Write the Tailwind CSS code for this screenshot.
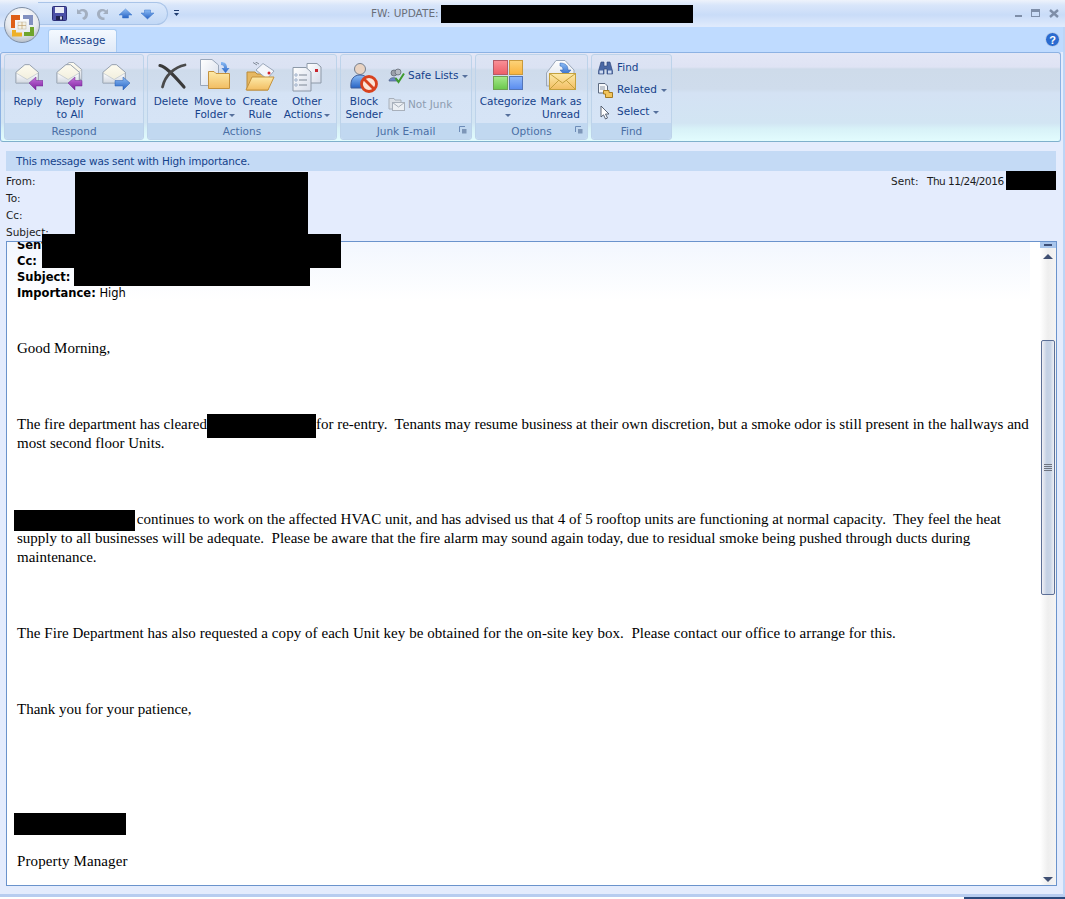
<!DOCTYPE html>
<html lang="en">
<head>
<meta charset="utf-8">
<title>FW: UPDATE</title>
<script src="https://cdn.jsdelivr.net/npm/@tailwindcss/browser@4"></script>
</head>
<body class="bg-[#e4ecfd]">

<!-- shared icon parts -->
<svg class="block h-0 w-0" aria-hidden="true">
  <defs>
    <linearGradient id="env" x1="0" y1="0" x2="0" y2="1"><stop offset="0" stop-color="#ffffff"/><stop offset="1" stop-color="#d3d9e2"/></linearGradient>
    <linearGradient id="flap" x1="0" y1="0" x2="0" y2="1"><stop offset="0" stop-color="#fdfbf0"/><stop offset="1" stop-color="#efecd9"/></linearGradient>
    <linearGradient id="fold" x1="0" y1="0" x2="0" y2="1"><stop offset="0" stop-color="#fdeaa8"/><stop offset="1" stop-color="#f2bd62"/></linearGradient>
    <linearGradient id="page" x1="0" y1="0" x2="1" y2="1"><stop offset="0" stop-color="#ffffff"/><stop offset="1" stop-color="#d5dcea"/></linearGradient>
    <linearGradient id="purple" x1="0" y1="0" x2="0" y2="1"><stop offset="0" stop-color="#c873de"/><stop offset="1" stop-color="#7a1f9c"/></linearGradient>
    <linearGradient id="blue" x1="0" y1="0" x2="0" y2="1"><stop offset="0" stop-color="#8cbcf5"/><stop offset="1" stop-color="#2763c4"/></linearGradient>
    <symbol id="openenv" viewBox="0 0 30 26">
      <path d="M1 10 L11 1.500 H16 L26 10 V22 H1Z" fill="url(#flap)" stroke="#8d99a8"/>
      <path d="M1.500 11 L13.500 18 L25.500 11 V21.500 H1.500Z" fill="url(#env)" stroke="#aab4c2" stroke-width="0.6"/>
    </symbol>
  </defs>
</svg>

<div class="relative flex h-[899px] w-[1065px] flex-col overflow-hidden [font-family:'DejaVu_Sans',sans-serif] text-[10.5px]">

  <!-- title bar -->
  <div class="flex h-[27px] shrink-0 items-center bg-[linear-gradient(#eef3fb_0,#d9e6fa_5px,#c9dcf8_15px,#dfeafc_26px)]">
    <div class="ml-[38px] flex h-[23px] w-[130px] items-center gap-[7px] rounded-r-[12px] border border-l-0 border-[#a9c4e8] bg-[linear-gradient(#dce9fb,#c2d8f6)] pl-[14px]">
      <svg width="15" height="15" viewBox="0 0 15 15"><rect x="0.500" y="0.500" width="14" height="14" rx="1" fill="#4a4fa6" stroke="#2d2f78"/><rect x="3" y="1" width="9" height="6" fill="#e9ecf6"/><rect x="4" y="10" width="7" height="4" fill="#20224f"/><rect x="8" y="10.500" width="2" height="3" fill="#cfd3e6"/></svg>
      <svg width="15" height="14" viewBox="0 0 15 14"><path d="M3 2 V7 H8 L6 5 C8 3.500 11 4.500 11 7 C11 9 10 10 8 11 L10 13 C13 12 14 9.500 14 7 C14 2.500 8.500 0.500 5 3.500Z" fill="#a3afc0"/></svg>
      <svg width="15" height="14" viewBox="0 0 15 14"><path d="M12 2 V7 H7 L9 5 C7 3.500 4 4.500 4 7 C4 9.500 6.500 11 8.500 10.500 L8.500 13 C4 13.500 1 10.500 1 7 C1 2.500 6.500 0.500 10 3.500Z" fill="#a3afc0"/></svg>
      <svg width="15" height="12" viewBox="0 0 15 12"><path d="M7.500 1 L14 7 H10.500 V10 H4.500 V7 H1Z" fill="url(#blue)" stroke="#3a74c9" stroke-width="0.5"/></svg>
      <svg width="15" height="12" viewBox="0 0 15 12"><path d="M7.500 11 L14 5 H10.500 V2 H4.500 V5 H1Z" fill="url(#blue)" stroke="#3a74c9" stroke-width="0.5"/></svg>
    </div>
    <svg class="ml-[5px]" width="7" height="9" viewBox="0 0 7 9"><rect x="1" y="1" width="5" height="1" fill="#1f3c70"/><path d="M1 4 H6 L3.500 7Z" fill="#1f3c70"/></svg>
    <div class="ml-[191px] text-[10.5px] leading-none text-[#6a6f78]">FW: UPDATE:</div>
    <div class="ml-auto flex items-start gap-[10px] pr-[6px]">
      <span class="mt-[6px] block h-[2px] w-[7px] bg-[#7e8ea8]"></span>
      <span class="-ml-px block h-[8px] w-[9px] border border-t-[3px] border-[#7e8ea8]"></span>
      <svg class="-ml-px" width="10" height="9" viewBox="0 0 10 9"><path d="M1 1 L9 8 M9 1 L1 8" stroke="#7e8ea8" stroke-width="2.400"/></svg>
    </div>
  </div>

  <!-- tab row -->
  <div class="relative flex h-[25px] shrink-0 items-end bg-[#bfdbff] pl-[48px]">
    <div class="flex h-[23px] w-[69px] items-center justify-center rounded-t-[3px] border border-b-0 border-[#a9cbf2] bg-[linear-gradient(#f4f9ff,#dfe9f7)] text-[#15428b]">Message</div>
    <svg class="absolute right-[5px] top-[5px]" width="15" height="15" viewBox="0 0 15 15"><circle cx="7.500" cy="7.500" r="7" fill="#2a6bd0" stroke="#c8d8ee"/><text x="7.500" y="11.500" text-anchor="middle" font-size="11" font-weight="700" fill="#ffffff" font-family="Liberation Sans">?</text></svg>
  </div>

  <!-- ribbon -->
  <div class="mr-[4px] flex h-[90px] shrink-0 gap-[3px] rounded-[3px] border border-t-[#8db2e3] border-x-[#8db2e3] border-b-[#7fb0cc] bg-[linear-gradient(#e3e7f6_0,#dfe3f4_14px,#cedbea_16px,#cfdcec_36px,#d4e2f4_40px,#d2e5f3_70px,#d8f2f8_76px,#e2fcfe_88px)] pl-[3px] pt-[1px]">

    <!-- Respond -->
    <section class="flex h-[86px] w-[140px] flex-col rounded-[3px] border border-[#bdd3ea] bg-[linear-gradient(#dde4f4_0,#dbe2f3_13px,#cedbeb_15px,#d0ddee_34px,#d5e3f5_38px,#d6e4f6_68px)] text-[#15428b]">
      <div class="flex h-[68px] items-start whitespace-nowrap text-center leading-[13px]">
        <div class="flex w-[46px] flex-col items-center pt-[7px]">
          <svg class="h-[32px] w-[30px]" viewBox="-2 0 30 32"><use href="#openenv" x="0" y="1" width="27" height="24"/><path d="M14 21 L21 15 V18.500 H28 V24 H21 V28Z" fill="url(#purple)" stroke="#6c2a8e" stroke-width="0.500"/></svg>
          <span class="mt-[1px]">Reply</span>
        </div>
        <div class="flex w-[38px] flex-col items-center pt-[7px]">
          <svg class="h-[32px] w-[30px]" viewBox="-1 0 30 32"><use href="#openenv" x="4" y="-1" width="25" height="22"/><use href="#openenv" x="0" y="1" width="27" height="24"/><path d="M12 21 L19 15 V18.500 H26 V24 H19 V28Z" fill="url(#purple)" stroke="#6c2a8e" stroke-width="0.500"/></svg>
          <span class="mt-[1px]">Reply<br>to All</span>
        </div>
        <div class="flex w-[52px] flex-col items-center pt-[7px]">
          <svg class="h-[32px] w-[30px]" viewBox="-2 0 30 32"><use href="#openenv" x="0" y="1" width="27" height="24"/><path d="M28 21 L21 15 V18.500 H13 V24 H21 V28Z" fill="url(#blue)" stroke="#2b5fb0" stroke-width="0.500"/></svg>
          <span class="mt-[1px]">Forward</span>
        </div>
      </div>
      <div class="flex h-[16px] items-center justify-center rounded-b-[3px] bg-[#c1d8f0] pt-px text-[#4a6fa5]">Respond</div>
    </section>

    <!-- Actions -->
    <section class="flex h-[86px] w-[190px] flex-col rounded-[3px] border border-[#bdd3ea] bg-[linear-gradient(#dde4f4_0,#dbe2f3_13px,#cedbeb_15px,#d0ddee_34px,#d5e3f5_38px,#d6e4f6_68px)] text-[#15428b]">
      <div class="flex h-[68px] items-start whitespace-nowrap text-center leading-[13px]">
        <div class="flex w-[46px] flex-col items-center pt-[7px]">
          <svg class="h-[32px] w-[32px]" viewBox="0 0 32 32"><path d="M5 3.500 C12 5 21 16 29 25" fill="none" stroke="#3a3a3a" stroke-width="3.200" stroke-linecap="round"/><path d="M30 3 C20 5 10 13 7.500 25" fill="none" stroke="#4a4a4a" stroke-width="2.800" stroke-linecap="round"/></svg>
          <span class="mt-[1px]">Delete</span>
        </div>
        <div class="flex w-[42px] flex-col items-center pt-[7px]">
          <svg class="h-[32px] w-[32px] overflow-visible" viewBox="0 0 32 32"><path d="M1.500 -2.500 H13 L19.500 3 V23.500 H1.500Z" fill="url(#page)" stroke="#9aa7ba"/><path d="M9.500 9.500 H15 L17 11.500 H30.500 V26.500 H9.500Z" fill="url(#fold)" stroke="#c4923e"/><path d="M22 0 C26 0 28 2 28 6 H30.500 L26.500 11 L22.500 6 H25 C25 4 24 3 22 3Z" fill="url(#blue)"/></svg>
          <span class="mt-[1px]">Move to<br>Folder<span class="ml-[2px] inline-block h-0 w-0 border-x-[3px] border-t-[3px] border-x-transparent border-t-[#56709c] align-middle"></span></span>
        </div>
        <div class="flex w-[48px] flex-col items-center pt-[7px]">
          <svg class="h-[32px] w-[32px]" viewBox="0 0 32 32"><path d="M3 10 H11 L13 12 H24 V28 H3Z" fill="#e6b862" stroke="#b98a38"/><path d="M12 8 L19 1.500 L30 9 L23 17Z" fill="#f4f6fb" stroke="#9aa7ba"/><path d="M13 3 L9 0.500 M15 2 L11 -0.500" stroke="#7f8896"/><circle cx="25" cy="11" r="1.500" fill="#d3242c"/><path d="M8 15 H30 L24 28 H2Z" fill="url(#fold)" stroke="#c4923e"/></svg>
          <span class="mt-[1px]">Create<br>Rule</span>
        </div>
        <div class="flex w-[46px] flex-col items-center pt-[7px]">
          <svg class="h-[32px] w-[32px]" viewBox="0 0 32 32"><path d="M16 1.500 H26 L30 5 V21 H16Z" fill="url(#page)" stroke="#8d99a8"/><rect x="24" y="7" width="3" height="3" fill="#c8242c"/><path d="M2 5.500 H15 L20 10 V29 H2Z" fill="url(#page)" stroke="#8d99a8"/><path d="M8 13 H16 M8 18 H16 M8 23 H16" stroke="#7f8896"/><circle cx="5" cy="13" r="1.200" fill="#ffffff" stroke="#5c7aa5" stroke-width="0.600"/><circle cx="5" cy="18" r="1.200" fill="#ffffff" stroke="#5c7aa5" stroke-width="0.600"/><circle cx="5" cy="23" r="1.200" fill="#ffffff" stroke="#5c7aa5" stroke-width="0.600"/></svg>
          <span class="mt-[1px]">Other<br>Actions<span class="ml-[2px] inline-block h-0 w-0 border-x-[3px] border-t-[3px] border-x-transparent border-t-[#56709c] align-middle"></span></span>
        </div>
      </div>
      <div class="flex h-[16px] items-center justify-center rounded-b-[3px] bg-[#c1d8f0] pt-px text-[#4a6fa5]">Actions</div>
    </section>

    <!-- Junk E-mail -->
    <section class="flex h-[86px] w-[132px] flex-col rounded-[3px] border border-[#bdd3ea] bg-[linear-gradient(#dde4f4_0,#dbe2f3_13px,#cedbeb_15px,#d0ddee_34px,#d5e3f5_38px,#d6e4f6_68px)] text-[#15428b]">
      <div class="flex h-[68px] items-start whitespace-nowrap text-center leading-[13px]">
        <div class="flex w-[46px] flex-col items-center pt-[7px]">
          <svg class="h-[32px] w-[32px]" viewBox="0 0 32 32"><circle cx="12" cy="7" r="5.500" fill="#e9d3c2" stroke="#77808d"/><path d="M3 26 C2 17 6 13 12 13 C18 13 22 17 21 26Z" fill="url(#blue)" stroke="#3f5f9c"/><circle cx="21" cy="22" r="7.500" fill="#fbe5d8" stroke="#d8421e" stroke-width="2.800"/><path d="M16 17 L26 27" stroke="#d8421e" stroke-width="2.800"/></svg>
          <span class="mt-[1px]">Block<br>Sender</span>
        </div>
        <div class="flex flex-col pl-[1px] pt-[8px] text-left">
          <div class="flex h-[25px] items-center gap-[3px]">
            <svg width="17" height="17" viewBox="0 0 17 17"><circle cx="6" cy="6" r="3" fill="#9aa0aa" stroke="#59606c" stroke-width="0.700"/><circle cx="10" cy="5" r="3" fill="#b5bac3" stroke="#59606c" stroke-width="0.700"/><path d="M1 14 C1 9.500 10 9.500 10 14Z" fill="#6a87c2" stroke="#4b5c83" stroke-width="0.700"/><path d="M7.500 11 L10.500 15 L16 6.500" fill="none" stroke="#3e9a2e" stroke-width="2"/></svg>
            <span>Safe Lists<span class="ml-[4px] inline-block h-0 w-0 border-x-[3px] border-t-[3px] border-x-transparent border-t-[#56709c] align-middle"></span></span>
          </div>
          <div class="mt-[6px] flex h-[20px] items-center gap-[3px] text-[#8d9cb0]">
            <svg width="17" height="16" viewBox="0 0 17 16"><path d="M1 2.500 H6 L7 4 H13 V13 H1Z" fill="#dbe0e7" stroke="#a8b0bb"/><rect x="4.500" y="6.500" width="12" height="8" fill="#eceff3" stroke="#a8b0bb"/><path d="M4.500 6.500 L10.500 11 L16.500 6.500" fill="none" stroke="#a8b0bb"/></svg>
            <span>Not Junk</span>
          </div>
        </div>
      </div>
      <div class="relative flex h-[16px] items-center justify-center rounded-b-[3px] bg-[#c1d8f0] pt-px text-[#4a6fa5]">Junk E-mail
        <svg class="absolute right-[4px] top-[3px]" width="8" height="8" viewBox="0 0 8 8"><path d="M0.500 6 V0.500 H6" fill="none" stroke="#6d8cb8"/><rect x="3" y="3" width="4.500" height="4.500" fill="#7d96b8"/></svg>
      </div>
    </section>

    <!-- Options -->
    <section class="flex h-[86px] w-[113px] flex-col rounded-[3px] border border-[#bdd3ea] bg-[linear-gradient(#dde4f4_0,#dbe2f3_13px,#cedbeb_15px,#d0ddee_34px,#d5e3f5_38px,#d6e4f6_68px)] text-[#15428b]">
      <div class="flex h-[68px] items-start whitespace-nowrap text-center leading-[13px]">
        <div class="flex w-[64px] flex-col items-center pt-[5px]">
          <div class="grid h-[30px] w-[30px] grid-cols-2 gap-px">
            <span class="border border-[#b25a66] bg-[linear-gradient(#f88f96,#ee5f68)]"></span>
            <span class="border border-[#c99a3d] bg-[linear-gradient(#fcd278,#f9b43f)]"></span>
            <span class="border border-[#6fa052] bg-[linear-gradient(#a4e888,#6cc84e)]"></span>
            <span class="border border-[#5476b8] bg-[linear-gradient(#8fb8f8,#5b8df0)]"></span>
          </div>
          <span class="mt-[5px]">Categorize<br><span class="inline-block h-0 w-0 border-x-[3px] border-t-[3px] border-x-transparent border-t-[#56709c] align-middle"></span></span>
        </div>
        <div class="flex w-[42px] flex-col items-center pt-[7px]">
          <svg class="h-[32px] w-[32px] overflow-visible" viewBox="0 0 32 32"><path d="M1.500 11 L11 -1.500 H20 L29 8 V24 H1.500Z" fill="url(#env)" stroke="#9aa7ba"/><path d="M15 1 C20 1 23 3 23 8 H26 L20.500 14 L15 8 H18 C18 6 17 4 15 4Z" fill="url(#blue)" stroke="#2b5fb0" stroke-width="0.500"/><rect x="4.500" y="11.500" width="26" height="16" fill="url(#fold)" stroke="#c4a13e"/><path d="M4.500 11.500 L17.500 21 L30.500 11.500 M4.500 27.500 L14 18 M30.500 27.500 L21 18" fill="none" stroke="#c4a13e"/></svg>
          <span class="mt-[1px]">Mark as<br>Unread</span>
        </div>
      </div>
      <div class="relative flex h-[16px] items-center justify-center rounded-b-[3px] bg-[#c1d8f0] pt-px text-[#4a6fa5]">Options
        <svg class="absolute right-[4px] top-[3px]" width="8" height="8" viewBox="0 0 8 8"><path d="M0.500 6 V0.500 H6" fill="none" stroke="#6d8cb8"/><rect x="3" y="3" width="4.500" height="4.500" fill="#7d96b8"/></svg>
      </div>
    </section>

    <!-- Find -->
    <section class="flex h-[86px] w-[81px] flex-col rounded-[3px] border border-[#bdd3ea] bg-[linear-gradient(#dde4f4_0,#dbe2f3_13px,#cedbeb_15px,#d0ddee_34px,#d5e3f5_38px,#d6e4f6_68px)] text-[#15428b]">
      <div class="flex h-[68px] flex-col pl-[6px] pt-[2px]">
        <div class="flex h-[22px] items-center gap-[4px]">
          <svg width="15" height="14" viewBox="0 0 15 14"><path d="M3 1 H6 V5 H9 V1 H12 L14.500 10 V13 H9 V8 H6 V13 H0.500 V10Z" fill="#4a68a5" stroke="#2a3f73" stroke-width="0.600"/><rect x="1.500" y="9.500" width="3.500" height="3" fill="#cfdcf2"/><rect x="10" y="9.500" width="3.500" height="3" fill="#cfdcf2"/></svg>
          <span>Find</span>
        </div>
        <div class="flex h-[22px] items-center gap-[4px]">
          <svg width="15" height="15" viewBox="0 0 15 15"><path d="M0.500 0.500 H7 L9.500 3 V10 H0.500Z" fill="#f6f8fb" stroke="#5d6a80"/><path d="M2 4 H7 M2 6 H7" stroke="#5d6a80" stroke-width="0.700"/><path d="M5.500 7.500 H11 V9.500 H14.500 V14.500 H7.500 V11 H5.500Z" fill="#f2c55c" stroke="#a37a22"/></svg>
          <span>Related<span class="ml-[4px] inline-block h-0 w-0 border-x-[3px] border-t-[3px] border-x-transparent border-t-[#56709c] align-middle"></span></span>
        </div>
        <div class="flex h-[22px] items-center gap-[4px]">
          <svg width="15" height="15" viewBox="0 0 15 15"><path d="M3 1 V12 L5.500 9.800 L7.500 14 L9.500 13 L7.500 9 H11Z" fill="#ffffff" stroke="#4a5568" stroke-width="0.900"/></svg>
          <span>Select<span class="ml-[4px] inline-block h-0 w-0 border-x-[3px] border-t-[3px] border-x-transparent border-t-[#56709c] align-middle"></span></span>
        </div>
      </div>
      <div class="flex h-[16px] items-center justify-center rounded-b-[3px] bg-[#c1d8f0] pt-px text-[#4a6fa5]">Find</div>
    </section>
  </div>

  <!-- message header -->
  <div class="shrink-0 pl-[6px] pr-[9px] pt-[9px] text-[#1c1c1c]">
    <div class="flex h-[20px] items-center bg-[#c4daf5] pl-[10px] pt-px tracking-[-0.18px] text-[#15428b]">This message was sent with High importance.</div>
    <div class="flex h-[70px] justify-between leading-[17px]">
      <div class="pt-[2px]">
        <p>From:</p>
        <p>To:</p>
        <p>Cc:</p>
        <p>Subject:</p>
      </div>
      <div class="flex w-[165px] pt-[2px]">
        <span class="w-[36px]">Sent:</span>
        <span class="whitespace-nowrap tracking-[-0.5px]">Thu 11/24/2016</span>
      </div>
    </div>
  </div>

  <!-- message body -->
  <div class="ml-[6px] mr-[8px] flex h-[645px] shrink-0 overflow-hidden border border-[#6a93cc] bg-white">
    <div class="min-w-0 flex-1 overflow-hidden">
      <div class="mr-[10px] -mt-[6px] bg-[linear-gradient(#f1f6fe,#ffffff)] pl-[10px] pt-[1px] text-[11.5px] leading-[16px] text-black">
        <p class="font-bold">Sent:</p>
        <p class="font-bold">Cc:</p>
        <p class="font-bold">Subject:</p>
        <p><b>Importance:</b> High</p>
      </div>
      <div class="px-[10px] pt-[38px] text-[15px] leading-[19px] text-black [font-family:'Liberation_Serif',serif]">
        <p>Good Morning,</p>
        <p class="mt-[57px]">The fire department has cleared<span class="-my-[4px] inline-block h-[24px] w-[109px] bg-black align-middle"></span>for re-entry.&nbsp; Tenants may resume business at their own discretion, but a smoke odor is still present in the hallways and most second floor Units.</p>
        <p class="mt-[57px]"><span class="-my-[4px] -ml-[3px] -mr-[2px] inline-block h-[21px] w-[121px] bg-black align-middle"></span> continues to work on the affected HVAC unit, and has advised us that 4 of 5 rooftop units are functioning at normal capacity.&nbsp; They feel the heat supply to all businesses will be adequate.&nbsp; Please be aware that the fire alarm may sound again today, due to residual smoke being pushed through ducts during maintenance.</p>
        <p class="mt-[57px] tracking-[0.05px]">The Fire Department has also requested a copy of each Unit key be obtained for the on-site key box.&nbsp; Please contact our office to arrange for this.</p>
        <p class="mt-[57px]">Thank you for your patience,</p>
        <div class="-ml-[3px] mt-[94px] h-[22px] w-[112px] bg-black"></div>
        <p class="mt-[17px] tracking-[0.12px]">Property Manager</p>
      </div>
    </div>
    <!-- scrollbar -->
    <div class="flex w-[16px] shrink-0 flex-col items-center bg-[linear-gradient(90deg,#ffffff,#eeeeee_50%,#f4f4f4)]">
      <div class="flex h-[6px] w-full items-center justify-center bg-[#a9c6ec]"><span class="block h-[2px] w-[8px] bg-[#3c4f78]"></span></div>
      <span class="mt-[6px] block h-0 w-0 border-x-[5px] border-b-[5px] border-x-transparent border-b-[#3f4f72]"></span>
      <div class="mt-[81px] flex h-[255px] w-[14px] shrink-0 items-center justify-center rounded-[2px] border border-[#5c6f96] bg-[linear-gradient(90deg,#f0f0f5,#c3d0e4_40%,#c8d4e6_70%,#eef0f5)]">
        <span class="block h-[7px] w-[8px] bg-[repeating-linear-gradient(#6f7480_0,#6f7480_1px,transparent_1px,transparent_2px)]"></span>
      </div>
      <span class="mb-[3px] mt-auto block h-0 w-0 border-x-[5px] border-t-[5px] border-x-transparent border-t-[#3f4f72]"></span>
    </div>
  </div>

  <!-- bottom edge -->
  <div class="mt-[8px] h-[3px] w-full shrink-0 bg-[#b8cdf0]"></div>
  <div class="flex h-[2px] w-full shrink-0"><div class="w-[964px] bg-white"></div><div class="flex-1 bg-[#2b4a7d]"></div></div>
  <div class="absolute right-0 top-[27px] h-[868px] w-[2px] bg-[#bdd5f6]"></div>

  <!-- office button (sits over title bar and tab row) -->
  <div class="absolute left-[4px] top-[7px] flex h-[36px] w-[36px] items-center justify-center rounded-full border border-[#7f8fa5] bg-[radial-gradient(circle_at_50%_30%,#ffffff,#e6e9ee_55%,#9aa5b2)]">
    <svg width="25" height="25" viewBox="0 0 25 25">
      <path d="M1 2 H10 V7 H5 V15 H1Z" fill="#de5f17"/>
      <path d="M13 2 H23 V12 H19 V6 H13Z" fill="#8290c0"/>
      <path d="M20 14 H24 V23 H14 V19 H20Z" fill="#6fa52c"/>
      <path d="M2 17 H6 V19.500 H12 V23.500 H2Z" fill="#eeb028"/>
      <rect x="8" y="9" width="8" height="7" fill="#f4f1e4" stroke="#b7b2a4" stroke-width="0.500"/>
      <path d="M12 9 V16 M8 12.500 H16" stroke="#c0a070" stroke-width="0.700"/>
    </svg>
  </div>

  <!-- redactions from the source image -->
  <div class="absolute left-[441px] top-[5px] h-[18px] w-[252px] bg-black"></div>
  <div class="absolute left-[75px] top-[172px] h-[62px] w-[233px] bg-black"></div>
  <div class="absolute left-[42px] top-[234px] h-[34px] w-[299px] bg-black"></div>
  <div class="absolute left-[74px] top-[268px] h-[18px] w-[236px] bg-black"></div>
  <div class="absolute left-[1006px] top-[171px] h-[19px] w-[50px] bg-black"></div>
</div>
</body>
</html>
